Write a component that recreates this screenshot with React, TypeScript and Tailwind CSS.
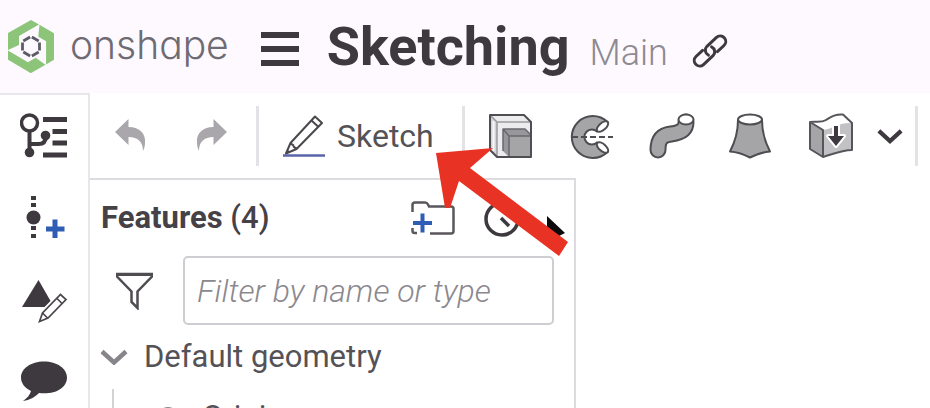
import React from "react";

const Logo = () => (
  <svg width="46" height="53" viewBox="0 0 46 53" fill="#8cc47a" aria-hidden="true">
    <path d="M0 30V13L23 0l8 4.500-20 11.500v9z" />
    <path d="M0 30V13L23 0l8 4.500-20 11.500v9z" transform="rotate(120 23 26.5)" />
    <path d="M0 30V13L23 0l8 4.500-20 11.500v9z" transform="rotate(240 23 26.5)" />
    <path
      d="M23 16.500l8.500 5v10l-8.500 5-8.500-5v-10z"
      fill="#fdf9fe"
      stroke="#5c5c66"
      strokeWidth="2.800"
      strokeDasharray="7.900 2"
      strokeDashoffset="-1"
    />
  </svg>
);

const LinkIcon = () => (
  <svg width="36" height="36" viewBox="-18 -18 36 36" fill="none" stroke="#3e393f" strokeWidth="3" strokeLinecap="round" aria-hidden="true">
    <g transform="rotate(-43)">
      <path d="M-5-5.500h-9a5.500 5.500 0 0 0 0 11H-1A5.500 5.500 0 0 0 4-2" />
      <path d="M5 5.500h9a5.500 5.500 0 0 0 0-11H1A5.500 5.500 0 0 0-4 2" />
    </g>
  </svg>
);

const TreeIcon = () => (
  <svg width="48" height="48" viewBox="0 0 48 48" fill="none" stroke="#3e393f" aria-hidden="true">
    <circle cx="9.500" cy="11" r="8" strokeWidth="3.500" />
    <path d="M9.500 20v20M9.500 32h9c5 0 7.500-3 7.500-8" strokeWidth="4" />
    <circle cx="9.500" cy="40.500" r="4.800" fill="#3e393f" stroke="none" />
    <circle cx="25.500" cy="23.500" r="4.800" fill="#3e393f" stroke="none" />
    <path d="M23 7.500h24M32.500 19.500H47M32.500 31H47M23 43h24" strokeWidth="5" />
  </svg>
);

const InsertIcon = () => (
  <svg width="48" height="48" viewBox="0 0 48 48" fill="#3e393f" aria-hidden="true">
    <path d="M11 2h5v4h-5zM11 9h5v4h-5zM11 32h5v4h-5zM11 40h5v4h-5z" />
    <circle cx="13.500" cy="23.500" r="7" />
    <path d="M35 25.500v18.500M26 35h18.500" stroke="#2f5cb5" strokeWidth="5" />
  </svg>
);

const ShapePenIcon = () => (
  <svg width="48" height="48" viewBox="0 0 48 48" fill="#3e393f" aria-hidden="true">
    <path d="M18.500 4L34 31H2z" />
    <path
      d="M19 46l3-9L40.500 18.500l5.500 5L28 42z"
      fill="#fff"
      stroke="#fff"
      strokeWidth="5"
    />
    <path
      d="M19.500 45.500l3-8.500L40.500 18.500l5.500 5L28 42zM22.500 37l5 5M37 22.500l5 5"
      fill="#fff"
      stroke="#4b464d"
      strokeWidth="1.700"
    />
  </svg>
);

const CommentIcon = () => (
  <svg width="48" height="48" viewBox="0 0 48 48" fill="#3e393f" aria-hidden="true">
    <path d="M24 3.500C11 3.500 1 10.500 1 19.500c0 6 4 10.500 10 13.500-1 4-4 7-8 10 7-1 12-4 16-8 15 2 28-4.500 28-15.500 0-9-10-16-23-16z" />
  </svg>
);

const UndoIcon = ({ className }: { className?: string }) => (
  <svg width="32" height="34" viewBox="0 0 32 34" fill="#a9a7ab" className={className} aria-hidden="true">
    <path d="M1 13L14.500 0v8C26 8 32 15 31 24c0 3-1 6-2 8 0-9-5-14-14.500-14v8z" />
  </svg>
);

const PencilIcon = () => (
  <svg width="42" height="44" viewBox="0 0 42 44" fill="none" aria-hidden="true">
    <path
      d="M3 39.500L7.500 29 32 2.500l7 6.500-25.500 26zM7.500 29c1 2 3 1 3 3s2 1 3 3M28.500 6.500l7 6.500"
      stroke="#4a474d"
      strokeWidth="2"
      strokeLinejoin="round"
    />
    <path d="M3 39.500l1.500-4 2.500 2.500z" fill="#4a474d" />
    <path d="M0 41.500h42" stroke="#5a64a8" strokeWidth="2.500" />
  </svg>
);

const ExtrudeIcon = () => (
  <svg width="44" height="46" viewBox="0 0 44 46" fill="none" strokeLinejoin="round" aria-hidden="true">
    <path d="M1 2h34l7 7v35H8l-7-7z" fill="#ececee" />
    <path d="M1 2l7 7v35l-7-7z" fill="#d4d3d6" />
    <path d="M4.500 8v30" stroke="#f7f7f8" strokeWidth="2" />
    <path d="M1 2l7 7h34M8 9v35" stroke="#9a999d" strokeWidth="1.500" />
    <path d="M14 16h22l6 6v22H20l-6-6z" fill="#98979a" />
    <path d="M20 23h22v21H20z" fill="#a5a4a7" />
    <path d="M14 38V16h22l6 6M14 16l6 7M20 44V23h22" stroke="#6a686c" strokeWidth="1.500" />
    <path d="M1 2h34l7 7v35H8l-7-7z" stroke="#504e52" strokeWidth="2" />
  </svg>
);

const RevolveIcon = () => (
  <svg width="44" height="46" viewBox="0 0 44 46" fill="none" stroke="#4f4d51" strokeWidth="2" aria-hidden="true">
    <path
      d="M38.500 9A21 21 0 1 0 38.500 39L28 29.500a7.500 7.500 0 1 1 0-11z"
      fill="#a5a4a7"
    />
    <ellipse cx="33.500" cy="13.500" rx="7" ry="3.500" transform="rotate(-42 33.500 13.500)" fill="#fff" />
    <ellipse cx="33.500" cy="34.500" rx="7" ry="3.500" transform="rotate(42 33.500 34.500)" fill="#fff" />
    <path d="M3 24h41" strokeDasharray="6 3" />
  </svg>
);

const SweepIcon = () => (
  <svg width="46" height="46" viewBox="0 0 46 46" fill="none" strokeLinecap="round" aria-hidden="true">
    <path d="M9 37C9 25 14 22 22 21s15-3 15-12" stroke="#4f4d51" strokeWidth="17" />
    <path d="M9 37C9 25 14 22 22 21s15-3 15-12" stroke="#a5a4a7" strokeWidth="13" />
    <ellipse cx="37" cy="6.500" rx="7.500" ry="5" fill="#fff" stroke="#4f4d51" strokeWidth="2" />
  </svg>
);

const LoftIcon = () => (
  <svg width="44" height="46" viewBox="0 0 44 46" stroke="#4f4d51" strokeWidth="2" strokeLinejoin="round" aria-hidden="true">
    <path d="M9 7c0 12-3 22-8 31.500 7 .500 14 3 20 6 6-3 13-5.500 20-6C36 29 33 19 33 7z" fill="#a5a4a7" />
    <ellipse cx="21" cy="6.500" rx="12" ry="5" fill="#fff" />
  </svg>
);

const SplitIcon = () => (
  <svg width="44" height="46" viewBox="0 0 44 46" strokeLinejoin="round" aria-hidden="true">
    <path d="M1 9c6-1 11 1 16-2S26 1 34 1.500L43 10v27c-10 0-19 4-29 7L1 36z" fill="#c2c1c4" />
    <path d="M1 9c6-1 11 1 16-2S26 1 34 1.500L43 10c-12-1-17 5-29 7z" fill="#fff" />
    <path d="M1 9l13 8v27L1 36z" fill="#a5a4a7" />
    <path
      d="M1 9c6-1 11 1 16-2S26 1 34 1.500L43 10v27c-10 0-19 4-29 7L1 36zM1 9l13 8v27"
      fill="none"
      stroke="#57555a"
      strokeWidth="2"
    />
    <path d="M25 13h4v10h6l-8 10-8-10h6z" fill="#3e393f" stroke="#fff" strokeWidth="4" />
    <path d="M25 13h4v10h6l-8 10-8-10h6z" fill="#3e393f" />
  </svg>
);

const FolderIcon = () => (
  <svg width="44" height="34" viewBox="0 0 44 34" fill="none" aria-hidden="true">
    <path
      d="M1.500 11V4q0-2.500 2.500-2.500h10q2 0 3 2l1 2h22q2.500 0 2.500 2.500v22q0 2.500-2.500 2.500H19M1.500 27v3q0 2 2.500 2h2"
      stroke="#5a575c"
      strokeWidth="2.500"
    />
    <path d="M11.500 12.500v19M2 22h19" stroke="#2f5cb5" strokeWidth="4" />
  </svg>
);

const ClockIcon = () => (
  <svg width="38" height="38" viewBox="0 0 38 38" fill="none" stroke="#3e393f" aria-hidden="true">
    <circle cx="19" cy="20" r="16" strokeWidth="3.500" />
    <path d="M18 19l8 8" strokeWidth="3.500" />
  </svg>
);

const FunnelIcon = () => (
  <svg width="37" height="38" viewBox="0 0 37 38" fill="none" stroke="#4f4c52" strokeWidth="2.500" aria-hidden="true">
    <path d="M1 2h35v2.500L21.500 19.500V36l-6-6V19.500L1 4.500z" />
    <path d="M1 2.500h35" strokeWidth="3" />
  </svg>
);

const Chevron = ({ color, width }: { color: string; width: number }) => (
  <svg width={width} height="16" viewBox="0 0 28 16" fill="none" aria-hidden="true">
    <path d="M2 2.500l12 11 12-11" stroke={color} strokeWidth="4.500" />
  </svg>
);

// Red pointer drawn over the toolbar, with the tip of the mouse cursor behind it
const Callout = () => (
  <svg
    className="absolute left-[436px] top-[148px] pointer-events-none"
    width="134"
    height="108"
    viewBox="0 0 134 108"
    aria-hidden="true"
  >
    <path d="M111 68v26l18-9z" fill="#0c0a0c" />
    <path d="M0 5L57 0 34 20l98 74-9 14L23 33l-9 27H9z" fill="#e83223" />
  </svg>
);

const railItems = [
  { label: "Feature list", icon: <TreeIcon /> },
  { label: "Insert", icon: <InsertIcon /> },
  { label: "Appearance", icon: <ShapePenIcon /> },
  { label: "Comments", icon: <CommentIcon /> },
];

const tools = [
  { label: "Extrude", icon: <ExtrudeIcon /> },
  { label: "Revolve", icon: <RevolveIcon /> },
  { label: "Sweep", icon: <SweepIcon /> },
  { label: "Loft", icon: <LoftIcon /> },
  { label: "Split", icon: <SplitIcon /> },
];

const Divider = () => <div className="w-[3px] h-[60px] shrink-0 bg-[#e4e2e6]" />;

const App = () => {
  return (
    <div className="relative h-screen overflow-hidden flex flex-col bg-white font-['Roboto',sans-serif] text-[#555257]">
      <header className="h-[93px] shrink-0 flex items-center pl-2 bg-[#fdf9fe]">
        <a href="#" className="flex items-center gap-4">
          <Logo />
          <span className="pb-1 font-['Inter',sans-serif] font-light text-[39px] leading-[48px] text-[#6f6b73] [font-feature-settings:'cv11']">
            onshape
          </span>
        </a>
        <button aria-label="Menu" className="ml-8 mt-1 w-[38px] flex flex-col gap-2 shrink-0">
          <span className="h-[6px] w-full bg-[#3e393f]" />
          <span className="h-[6px] w-full bg-[#3e393f]" />
          <span className="h-[6px] w-full bg-[#3e393f]" />
        </button>
        <div className="flex items-baseline ml-7 mt-1 gap-5">
          <h1 className="text-[54px] leading-[60px] font-bold text-[#3e393f]">Sketching</h1>
          <span className="text-[36px] font-light text-[#8d8a92]">Main</span>
        </div>
        <button aria-label="Copy link" className="ml-6 mt-2">
          <LinkIcon />
        </button>
      </header>

      <div className="flex flex-1 min-h-0">
        <nav className="w-[90px] shrink-0 border-t-2 border-r-2 border-[#e9e6eb] flex flex-col">
          {railItems.map((item) => (
            <button
              key={item.label}
              aria-label={item.label}
              className="h-[82px] shrink-0 flex items-center justify-center"
            >
              {item.icon}
            </button>
          ))}
        </nav>

        <div className="flex-1 min-w-0 flex flex-col">
          <div className="h-[85px] shrink-0 flex items-center pl-6">
            <button aria-label="Undo" className="shrink-0">
              <UndoIcon />
            </button>
            <button aria-label="Redo" className="shrink-0 ml-[50px] mr-7">
              <UndoIcon className="-scale-x-100" />
            </button>
            <Divider />
            <button className="ml-6 mr-7 flex items-center gap-3 shrink-0">
              <PencilIcon />
              <span className="text-[32px] leading-[40px]">Sketch</span>
            </button>
            <Divider />
            <div className="flex items-center gap-9 ml-6 shrink-0">
              {tools.map((tool) => (
                <button key={tool.label} aria-label={tool.label} className="w-[44px]">
                  {tool.icon}
                </button>
              ))}
            </div>
            <button aria-label="More tools" className="ml-6 mr-3 shrink-0">
              <Chevron color="#3e393f" width={26} />
            </button>
            <Divider />
          </div>

          <aside className="w-[486px] flex-1 min-h-0 border-t-2 border-r-2 border-[#dddbdf]">
            <div className="h-[76px] flex items-center pl-[11px]">
              <h2 className="flex-1 text-[31px] leading-[40px] font-bold text-[#454147]">
                Features <span className="font-medium">(4)</span>
              </h2>
              <button aria-label="New folder">
                <FolderIcon />
              </button>
              <button aria-label="History" className="ml-7 mr-[53px]">
                <ClockIcon />
              </button>
            </div>
            <div className="flex items-center pl-[26px] pr-5">
              <label htmlFor="filter" aria-label="Filter" className="mr-[30px] shrink-0">
                <FunnelIcon />
              </label>
              <input
                id="filter"
                type="text"
                placeholder="Filter by name or type"
                className="flex-1 min-w-0 h-[69px] px-3 rounded-[5px] border-2 border-[#cfcdd2] text-[32px] font-light italic outline-none placeholder:text-[#8b888e]"
              />
            </div>
            <button className="h-[64px] flex items-center gap-4 pl-[10px]">
              <Chevron color="#88858a" width={28} />
              <span className="text-[31px] leading-[40px]">Default geometry</span>
            </button>
            <div className="ml-[22px] border-l-2 border-[#d5d3d7] h-[56px] flex items-center pl-[44px] gap-6">
              <span className="size-5 rounded-full bg-[#88858a]" />
              <span className="text-[31px] leading-[40px]">Origin</span>
            </div>
          </aside>
        </div>
      </div>
      <Callout />
    </div>
  );
};

export default App;
